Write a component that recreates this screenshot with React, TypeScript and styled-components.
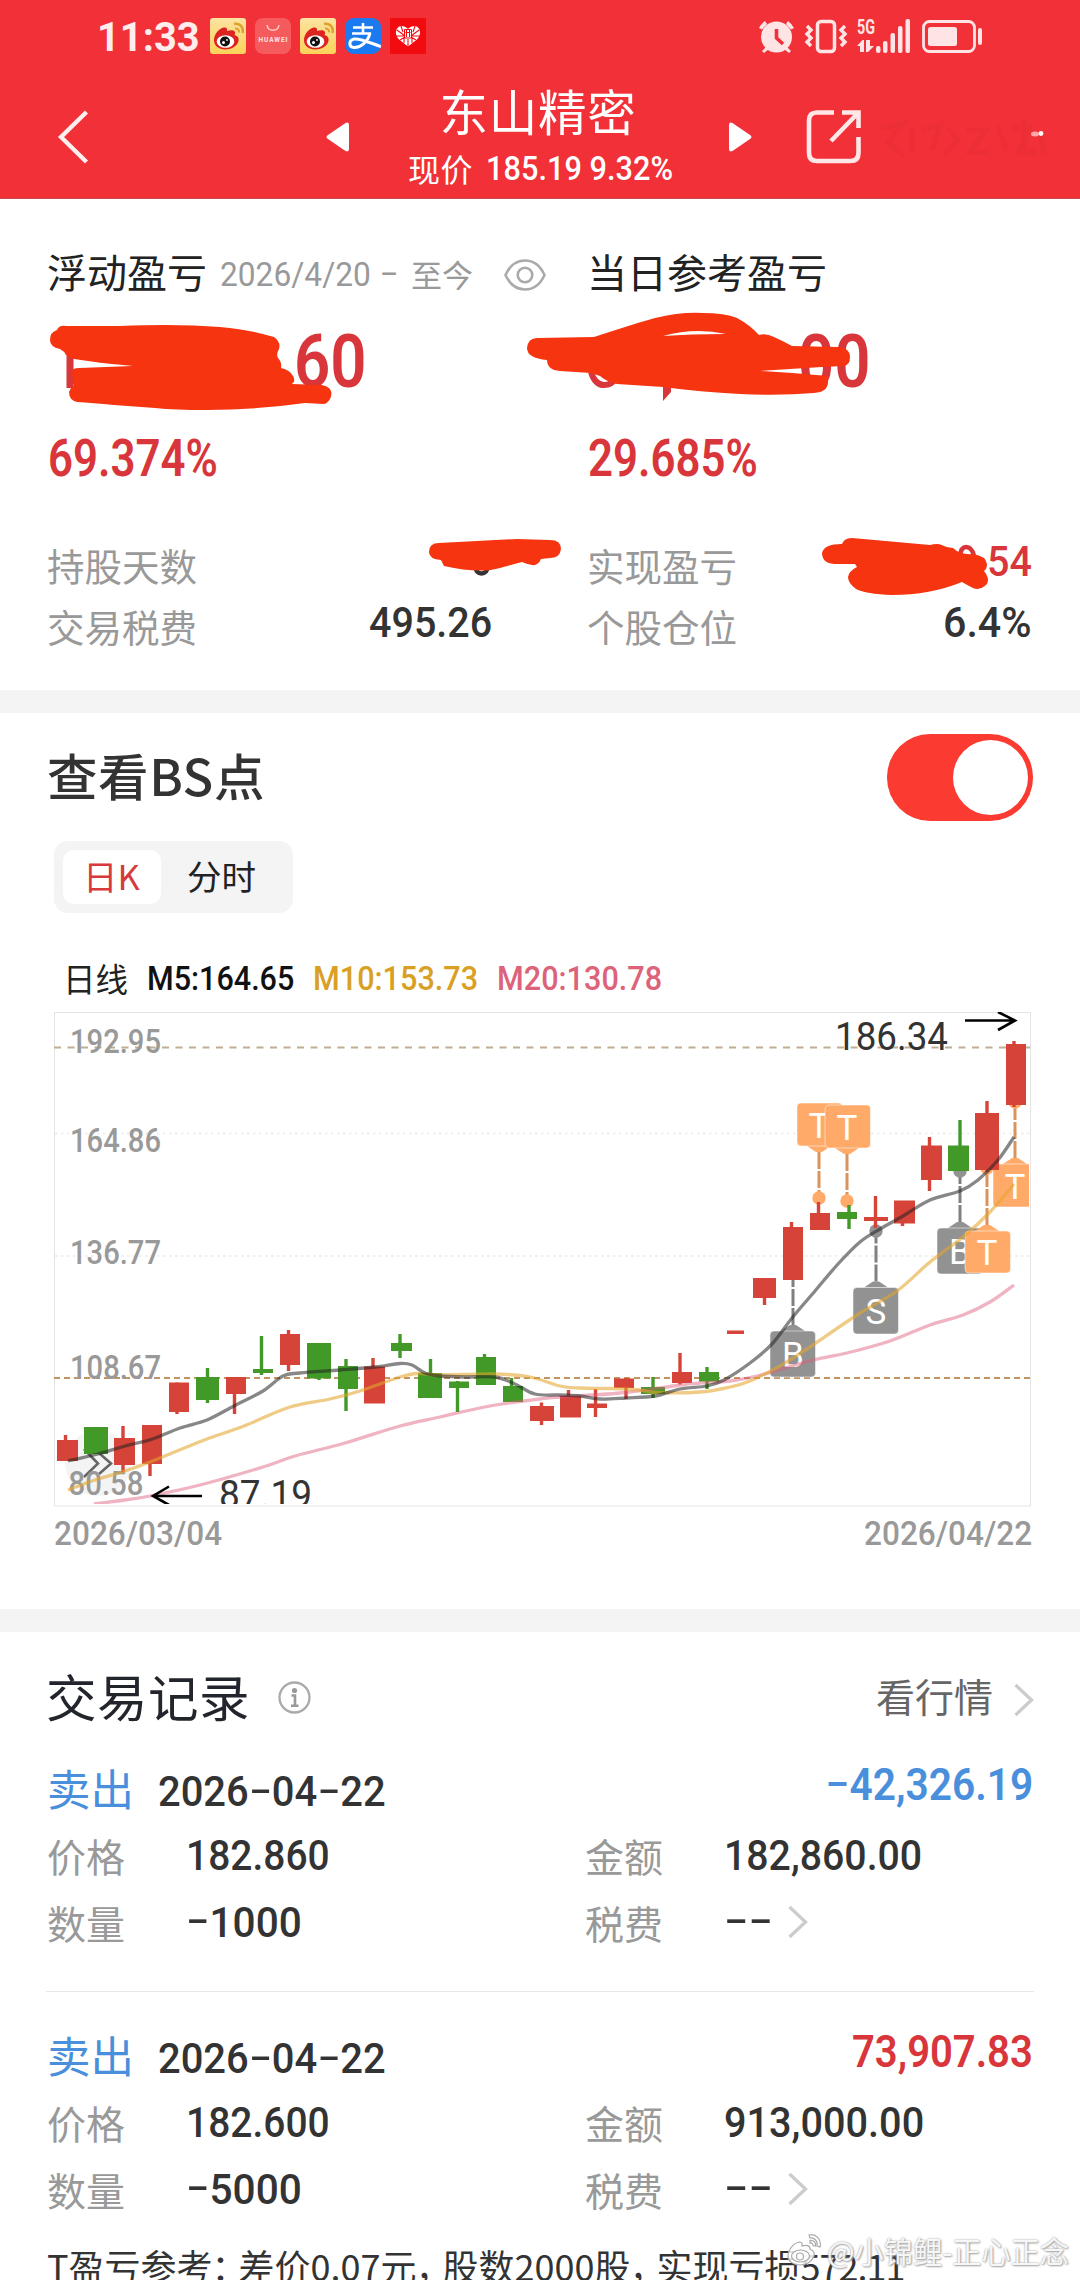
import React, { useLayoutEffect, useRef, useState } from "react";
import styled, { createGlobalStyle, css } from "styled-components";

const cjk = `"Noto Sans CJK SC", sans-serif`;
const latin = `Roboto, "Noto Sans CJK SC", sans-serif`;
const RED = "#d8363a";
const BLUE = "#4a8fdb";
const DARK = "#333333";
const GREY = "#999999";
const INK = "#f6340f";

const GlobalStyle = createGlobalStyle`
  html, body { margin: 0; padding: 0; background: #fff; }
  * { box-sizing: border-box; }
  svg { display: block; flex: none; }
`;

/* ---------- text ---------- */

const Zh = styled.span<{ $size: number; $color?: string; $weight?: number; $gap?: number; $lh?: number }>`
  font-family: ${cjk};
  font-size: ${(p) => p.$size}px;
  font-weight: ${(p) => p.$weight ?? 400};
  color: ${(p) => p.$color ?? DARK};
  letter-spacing: ${(p) => p.$gap ?? 0}px;
  line-height: ${(p) => (p.$lh ? `${p.$lh}px` : 1)};
  white-space: nowrap;
  margin-left: -1px;
`;

const FitBox = styled.span<{ $w: number; $size: number; $color: string; $weight: number; $lh?: number }>`
  display: block;
  flex: none;
  width: ${(p) => p.$w}px;
  font-family: ${latin};
  font-size: ${(p) => p.$size}px;
  font-weight: ${(p) => p.$weight};
  color: ${(p) => p.$color};
  line-height: ${(p) => (p.$lh ? `${p.$lh}px` : 1)};
  white-space: nowrap;
`;

const FitInner = styled.span`
  display: inline-block;
  transform-origin: 0 50%;
`;

const Dash = styled.span`
  display: inline-block;
  width: 0.58em;
  text-align: center;
  transform: translateY(-0.05em) scale(1.65, 0.9);
`;

type NumProps = { children: string; w: number; size?: number; color?: string; weight?: number; lh?: number };

/* Condenses a run of figures to the given width. */
function Num({ children, w, size = 43, color = DARK, weight = 500, lh }: NumProps) {
  const ref = useRef<HTMLSpanElement>(null);
  const [k, setK] = useState(1);
  useLayoutEffect(() => {
    if (ref.current) setK(w / ref.current.offsetWidth);
  }, [w, size, children]);
  return (
    <FitBox $w={w} $size={size} $color={color} $weight={weight} $lh={lh}>
      <FitInner ref={ref} style={{ transform: `scaleX(${k})` }}>
        {children.split("").map((c, i) => (c === "-" ? <Dash key={i}>-</Dash> : c))}
      </FitInner>
    </FitBox>
  );
}

/* ---------- page frame ---------- */

const Page = styled.div`
  position: relative;
  width: 1080px;
  height: 2280px;
  overflow: hidden;
  background: #fff;
`;

const Header = styled.header`
  height: 199px;
  background: #f13038;
  border-bottom: 1px solid #c9494b;
`;

const StatusBar = styled.div`
  height: 72px;
  padding: 0 96px 0 97px;
  display: flex;
  align-items: center;
  justify-content: space-between;
`;

const StatusGroup = styled.div<{ $gap: number }>`
  display: flex;
  align-items: center;
  gap: ${(p) => p.$gap}px;
`;

const ClockBox = styled.div`
  margin: 3px 1px 0 0;
`;

const NavBar = styled.div`
  height: 126px;
  padding-left: 57px;
  display: flex;
  align-items: flex-start;
`;

const NavItem = styled.div<{ $left: number; $top: number }>`
  margin-left: ${(p) => p.$left}px;
  margin-top: ${(p) => p.$top}px;
`;

const TitleBlock = styled.div`
  width: 264px;
  margin: 8px 0 0 59px;
  display: flex;
  flex-direction: column;
  align-items: center;
  gap: 8px;
`;

const TitleText = styled.div`
  height: 60px;
  padding-right: 5px;
  display: flex;
`;

const PriceLine = styled.div`
  width: 264px;
  height: 40px;
  display: flex;
  align-items: center;
  justify-content: space-between;
`;

const Band = styled.div<{ $h: number }>`
  height: ${(p) => p.$h}px;
  background: #f4f4f4;
`;

/* ---------- summary ---------- */

const Summary = styled.section`
  position: relative;
  height: 491px;
  padding: 42px 48px 0;
  display: grid;
  grid-template-columns: 540px 444px;
  align-content: start;
`;

const SummaryCol = styled.div`
  display: flex;
  flex-direction: column;
`;

const LabelLine = styled.div`
  height: 60px;
  display: flex;
  align-items: center;
`;

const DateRange = styled.div`
  display: flex;
  align-items: center;
  margin: 6px 0 0 13px;
  height: 50px;
`;

const RangeDash = styled.div`
  margin: 0 14px 0 9px;
`;

const EyeSlot = styled.div`
  margin: 7px 0 0 31px;
`;

const Big = styled.div<{ $left: number }>`
  height: 74px;
  margin: 24px 0 29px;
  padding-left: ${(p) => p.$left}px;
`;

const Percent = styled.div`
  height: 60px;
  margin-bottom: 45px;
  display: flex;
  align-items: center;
`;

const Stat = styled.div<{ $w: number }>`
  width: ${(p) => p.$w}px;
  height: 61px;
  display: flex;
  align-items: flex-start;
  justify-content: space-between;
`;

const Marker = styled.svg`
  position: absolute;
  left: 0;
  top: 0;
`;

/* ---------- chart section ---------- */

const ChartSection = styled.section`
  height: 896px;
  padding: 21px 47px 0 48px;
`;

const HeadRow = styled.div`
  height: 86px;
  display: flex;
  align-items: center;
  justify-content: space-between;
`;

const HeadTitle = styled.div`
  padding-bottom: 6px;
  display: flex;
  align-items: center;
`;

const Toggle = styled.div`
  width: 146px;
  height: 87px;
  border-radius: 43px;
  background: #fb3b31;
  padding: 6px 5px;
  display: flex;
  justify-content: flex-end;
`;

const Knob = styled.div`
  width: 75px;
  height: 75px;
  border-radius: 50%;
  background: #fff;
`;

const Segments = styled.div`
  width: 239px;
  height: 72px;
  margin: 21px 0 45px 6px;
  padding: 9px;
  border-radius: 14px;
  background: #f4f4f5;
  display: flex;
`;

const Segment = styled.div<{ $active?: boolean; $w: number }>`
  width: ${(p) => p.$w}px;
  display: flex;
  align-items: center;
  justify-content: center;
  padding-bottom: 4px;
  border-radius: 10px;
  ${(p) => p.$active && css`background: #fff;`}
`;

const Legend = styled.div`
  height: 40px;
  margin: 0 0 14px 16px;
  display: flex;
  align-items: center;
  gap: 19px;
`;

const ChartBox = styled.div`
  margin-left: 6px;
  width: 978px;
`;

const Dates = styled.div`
  height: 40px;
  margin: 6px 1px 0 6px;
  display: flex;
  align-items: center;
  justify-content: space-between;
`;

/* ---------- records ---------- */

const Records = styled.section`
  padding: 33px 46px 0 46px;
`;

const RecordsHead = styled.div`
  height: 60px;
  padding: 0 0 0 1px;
  display: flex;
  align-items: center;
`;

const InfoSlot = styled.div`
  margin: 4px auto 0 28px;
`;

const More = styled.div`
  display: flex;
  align-items: center;
  gap: 21px;
`;

const MoreChevron = styled.div`
  margin-top: 9px;
`;

const Entry = styled.article<{ $line?: boolean }>`
  padding: 35px 1px 0 2px;
  ${(p) => p.$line && css`
    padding-bottom: 39px;
    border-bottom: 1px solid #e8e8e8;
  `}
`;

const EntryHead = styled.div`
  height: 56px;
  margin-bottom: 9px;
  display: flex;
  align-items: center;
`;

const EntryDate = styled.div`
  margin: 8px auto 0 24px;
`;

const EntryAmount = styled.div`
  margin-bottom: 6px;
`;

const Fields = styled.div`
  display: grid;
  grid-template-columns: 538px 1fr;
  row-gap: 7px;
`;

const Field = styled.div`
  height: 60px;
  display: grid;
  grid-template-columns: 138px auto;
  align-items: center;
  justify-content: start;
`;

const FeeValue = styled.div`
  display: flex;
  align-items: center;
  gap: 15px;
`;

const Remark = styled.p`
  margin: 21px 0 0 1px;
  height: 50px;
  font-family: ${cjk};
  font-size: 36px;
  line-height: 50px;
  color: #333;
  white-space: nowrap;
`;

const Punct = styled.span`
  display: inline-block;
  width: 26px;
  text-indent: -1px;
`;

const Tight = styled.span`
  letter-spacing: -1px;
`;

const Watermark = styled.div`
  position: absolute;
  left: 786px;
  top: 2230px;
  height: 40px;
  display: flex;
  align-items: center;
  gap: 5px;
  font-family: ${cjk};
  font-size: 29.2px;
  line-height: 40px;
  color: rgba(255, 255, 255, 0.92);
  text-shadow: 0 0 2px #999, 1px 1px 2px #aaa;
  white-space: nowrap;
`;

/* ---------- icons ---------- */

const WeiboIcon = () => (
  <svg width="36" height="36" viewBox="0 0 36 36">
    <defs>
      <linearGradient id="wb" x1="0" y1="0" x2="0" y2="1">
        <stop offset="0" stopColor="#fbe3a0" />
        <stop offset="1" stopColor="#fbd25a" />
      </linearGradient>
    </defs>
    <rect width="36" height="36" rx="3" fill="url(#wb)" />
    <path d="M4 22C4 16 10 9 15 9.500C18 10 17 13 17 13C20 12 24 11.500 25 14C25.500 15.500 24.500 17 24.500 17C28 18 29 20 28.500 23C27.500 28 21 31.500 15 31.500C9 31.500 4 28 4 22Z" fill="#dc2320" />
    <ellipse cx="15.500" cy="23.500" rx="8.800" ry="6.300" fill="#fff" />
    <circle cx="15" cy="23.500" r="5" fill="#111" />
    <circle cx="13.500" cy="24.500" r="1.500" fill="#fff" />
    <circle cx="17" cy="22" r="0.900" fill="#fff" />
    <path d="M24 6C29 4.500 34 9 32.500 15" fill="none" stroke="#e0a030" strokeWidth="2.500" />
    <path d="M25 10.500C27.500 10 29.500 12 29 14.500" fill="none" stroke="#e0a030" strokeWidth="2" />
  </svg>
);

const HuaweiIcon = () => (
  <svg width="36" height="36" viewBox="0 0 36 36">
    <rect width="36" height="36" rx="8" fill="#f55a5c" />
    <path d="M12 7C13 14 23 14 24 7" fill="none" stroke="#ffc9c9" strokeWidth="1.500" />
    <text x="18" y="23.500" fontFamily="Roboto, sans-serif" fontWeight="700" fontSize="6.500" fill="#ffe3e3" textAnchor="middle" textLength="29">HUAWEI</text>
  </svg>
);

const AlipayIcon = () => (
  <svg width="36" height="36" viewBox="0 0 36 36">
    <rect width="36" height="36" rx="9" fill="#1b7af0" />
    <g fill="none" stroke="#fff" strokeLinecap="butt">
      <path d="M8 9.500H28M18 5V15.500M7 15.500H26" strokeWidth="2.600" />
      <path d="M25 15C23 24 15 30 9 29.500C3.500 29 3.500 22.500 9 21C15 20 25 25 36 28.500" strokeWidth="3" />
    </g>
  </svg>
);

const HeartIcon = () => (
  <svg width="36" height="36" viewBox="0 0 36 36">
    <rect width="36" height="36" fill="#f20c10" />
    <path d="M18 28.500L9 21.500C3.500 16 6 8 12 8C15 8 18 11 18 11C18 11 21 8 24 8C30 8 32.500 16 27 21.500Z" fill="#fff" />
    <path d="M7 12L15 18M29 12L21 18M11 8L13 14M25 8L23 14M6 18H14M30 18H22M10 22L15 19M26 22L21 19M14 25V20M22 25V20M18 29V21" stroke="#f20c10" strokeWidth="1.100" />
    <path d="M14.500 11.500H21.500V20H14.500ZM15.500 14.500H20.500M16.500 12V19M19.500 12V19" fill="none" stroke="#f20c10" strokeWidth="1" />
  </svg>
);

const SYS = "#ffe4e6";

const SystemIcons = () => (
  <svg width="226" height="36" viewBox="759 18 226 36">
    <g fill={SYS}>
      <circle cx="777.500" cy="37" r="15.500" />
      <path d="M760 28A20 20 0 0 1 766 21L768 24L763 29.500ZM795 28A20 20 0 0 0 789 21L787 24L792 29.500Z" />
      <path d="M763 51L768 46L770 49L765 53ZM792 51L787 46L785 49L790 53Z" />
    </g>
    <path d="M777.500 29V38L784 44" fill="none" stroke="#f13038" strokeWidth="3.600" />
    <g fill="none" stroke={SYS}>
      <rect x="818.500" y="21.500" width="17" height="30" rx="3.500" strokeWidth="3.500" />
      <path d="M808 26L812 30L808 34L812 38L808 42L812 46" strokeWidth="3.400" />
      <path d="M846 26L842 30L846 34L842 38L846 42L842 46" strokeWidth="3.400" />
      <rect x="924.500" y="21.500" width="51" height="30" rx="6" strokeWidth="2.800" />
    </g>
    <text x="858" y="34" fontFamily="Roboto, sans-serif" fontWeight="700" fontSize="20.500" fill={SYS} textLength="18" lengthAdjust="spacingAndGlyphs">5G</text>
    <g fill={SYS}>
      <path d="M858 46L863.500 40H865V52H861V46ZM867 40H871V46H875L869 52H867Z" />
      <rect x="877" y="46" width="4.500" height="7" rx="2" />
      <rect x="884" y="41" width="4.500" height="12" rx="2" />
      <rect x="891.500" y="33" width="4.500" height="20" rx="2" />
      <rect x="899" y="26" width="4.500" height="27" rx="2" />
      <rect x="906.500" y="19" width="4.500" height="34" rx="2" />
      <rect x="929" y="27" width="29" height="19" rx="2.500" />
      <rect x="979" y="28" width="4" height="17" rx="2" />
    </g>
  </svg>
);

const BackIcon = () => (
  <svg width="32" height="54" viewBox="57 110 32 54">
    <path d="M86.500 112L61 137L86.500 162" fill="none" stroke="#fff0f0" strokeWidth="4.300" />
  </svg>
);

const Triangle = ({ flip }: { flip?: boolean }) => (
  <svg width="24" height="30" viewBox="0 0 24 30">
    <path transform={flip ? "translate(24 0) scale(-1 1)" : undefined} d="M2 13L19.500 1Q23 -0.500 23 3V27Q23 30.500 19.500 29L2 17Q-1 15 2 13Z" fill="#fff" />
  </svg>
);

const ShareIcon = () => (
  <svg width="56" height="56" viewBox="806 109 56 56">
    <g fill="none" stroke="#ffe6e7" strokeWidth="4.600">
      <path d="M834 112.500H817Q809 112.500 809 120.500V153Q809 161 817 161H850.500Q858.500 161 858.500 153V137" />
      <path d="M842 112.500H858.500V128M858 113L831 141" />
    </g>
  </svg>
);

const Smudge = () => (
  <svg width="170" height="50" viewBox="878 112 170 50">
    <g fill="none" stroke="#e62e36" strokeWidth="5" opacity="0.450">
      <path d="M882 128L902 124L888 142L904 156M912 128V152M922 130L940 126L932 150M948 128L958 140L944 154M966 130H986L970 152H990M998 126L1006 150M1012 128H1030L1018 152H1036M1024 120V156M1040 132L1044 154" />
    </g>
    <ellipse cx="1035" cy="134" rx="4" ry="2.500" fill="#f9a9ad" />
    <circle cx="1041" cy="133.500" r="2.400" fill="#fff" />
  </svg>
);

const EyeIcon = () => (
  <svg width="42" height="32" viewBox="0 0 42 32">
    <g fill="none" stroke="#aaa" strokeWidth="2.600">
      <path d="M1.500 16C6 6 13 1.500 21 1.500S36 6 40.500 16C36 26 29 30.500 21 30.500S6 26 1.500 16Z" />
      <circle cx="21" cy="16" r="7.300" />
    </g>
  </svg>
);

const InfoIcon = () => (
  <svg width="33" height="33" viewBox="0 0 33 33">
    <circle cx="16.500" cy="16.500" r="15" fill="none" stroke="#aaa" strokeWidth="2.300" />
    <circle cx="16.500" cy="9.500" r="2.600" fill="#999" />
    <path d="M13.500 14.500H17V24.500M13 24.800H20.500" fill="none" stroke="#999" strokeWidth="2.600" />
  </svg>
);

const ChevronIcon = () => (
  <svg width="20" height="34" viewBox="0 0 20 34">
    <path d="M1.500 2L17.500 17L1.500 32" fill="none" stroke="#ccc" strokeWidth="3.300" />
  </svg>
);

const WatermarkIcon = () => (
  <svg width="36" height="34" viewBox="0 0 36 34">
    <g fill="#fff" fillOpacity="0.850" stroke="#aaa" strokeWidth="1.200">
      <path d="M2 23C2 16 9 9 14 9C17 9.500 16 13 16 13C20 12 24 12 24 16C28 18 29 20 28 23C26 29 20 32 14 32C7 32 2 28 2 23Z" />
      <ellipse cx="14.500" cy="23" rx="9" ry="6" />
      <circle cx="14" cy="23.500" r="3.500" />
      <path d="M23 2C30 0 36 7 34 14L31 13C32 8 28 4 24 5ZM24 7.500C28 7 30 10 29.500 13L27 12.500C27 10.500 26 9.800 24 10Z" />
    </g>
  </svg>
);

/* ---------- marker strokes over the amounts ---------- */

const MarkerStrokes = () => (
  <Marker width="1080" height="491" viewBox="0 199 1080 491">
    <g fill="none" stroke={RED}>
      <path d="M70 345V388" strokeWidth="7" />
      <path d="M591 372Q595 385 604 385Q612 385 616 378" strokeWidth="6" />
      <path d="M960 560V556Q961 547 966 547Q972 547 974 556" strokeWidth="4.500" />
    </g>
    <path d="M663 386H671V392L663 401Z" fill={RED} />
    <path d="M475 566Q476 573.500 481.500 573.500Q487 573.500 488 566" fill="none" stroke={DARK} strokeWidth="4.500" />
    <g fill={INK}>
      <path d="M50 340Q50 332 57 330Q59 325 66 326L120 326Q145 325 165 325Q195 325 220 327Q252 330 274 337Q281 342 279 349Q276 354 278 358Q282 362 281 368Q290 370 293 376Q296 381 292 384L322 385Q331 387 331.500 393Q331 402 324 404L305 403Q255 410 207 410Q175 410 155 408L114 405Q92 403 77 402Q69 400 69 392Q70 388 74 385L73 384L72 371Q73 368 79 368L133 366Q100 363 88 361L74 359L66 355Q64 351 60 349Q50 347 50 340Z" />
      <path fillRule="evenodd" d="M527 348Q528 338 537 338L594 337Q640 322 655 318Q680 312 702 313Q725 313 737 318Q750 325 759 335Q766 333 774 337Q783 341 792 346L838 347Q850 348 850 357Q850 365 844 366L822 367L760 371Q795 373 828 376V382Q828 392 814 393Q780 396 740 394Q700 392 663 387L617 384Q607 382 600 376L591 373L560 371Q547 370 547 360Q527 358 527 348ZM663 336Q695 327 726 334Q690 334 663 336Z" />
      <path d="M429 552Q429 543 439 543L517 539L550 540Q561 540 561 549Q560 558 550 558L541 559Q538 566 532 565Q526 564 522 562L500 568Q480 574 444 566L441 560Q429 559 429 552Z" />
      <path d="M822 553Q824 544 842 544Q844 538 852 538L930 545Q937 543 942 545Q945 547 953 548Q960 555 973 554Q986 556 987 564Q987 569 984 571Q990 578 987 584Q980 591 973 588Q967 585 962 582Q930 595 892 595Q866 594 856 589Q848 583 848 577Q849 571 857 567L855 564H834Q822 563 822 553Z" />
    </g>
  </Marker>
);

/* ---------- candlestick chart ---------- */

type Candle = [up: 0 | 1, x1: number, x2: number, open: number, close: number, wick: number, hi: number, lo: number];

const candles: Candle[] = [
  [1, 57, 78, 1440, 1461, 65.5, 1435, 1461],
  [0, 84, 108, 1427, 1454, 96, 1427, 1454],
  [1, 114, 135, 1438, 1465, 123, 1426, 1472],
  [1, 142, 162, 1425, 1464, 150, 1425, 1476],
  [1, 169, 189, 1382.5, 1412, 177, 1382.5, 1414],
  [0, 196, 219, 1377, 1400, 207.5, 1368, 1403],
  [1, 226, 246, 1377, 1394, 234.5, 1377, 1414],
  [0, 253, 273, 1369, 1373, 261.500, 1336, 1375],
  [1, 280, 300, 1334, 1365, 288.500, 1330, 1371],
  [0, 307, 331, 1343, 1378.500, 319, 1343, 1380],
  [0, 338, 358, 1366, 1389, 346, 1359, 1411],
  [1, 364, 385, 1366.500, 1403.500, 373, 1358, 1403],
  [0, 391, 412, 1343, 1351, 400, 1334, 1358],
  [0, 418, 442, 1373, 1398, 430.500, 1359, 1398],
  [0, 449, 469, 1381.500, 1388, 457.500, 1381, 1412],
  [0, 476, 496, 1357, 1385, 484.500, 1354, 1385],
  [0, 503, 523, 1386, 1402, 511.500, 1378, 1402],
  [1, 530, 554, 1406, 1421, 541.500, 1402.500, 1425],
  [1, 560, 581, 1396, 1417.500, 568.500, 1390, 1417],
  [1, 587, 607, 1403.500, 1408, 595.500, 1389, 1417],
  [1, 614, 634, 1378.500, 1388, 626, 1378, 1399],
  [0, 641, 665, 1387, 1394, 653, 1377, 1398],
  [1, 672, 692, 1372, 1383, 680, 1353, 1384.500],
  [0, 699, 719, 1372, 1381.500, 707, 1367, 1389],
  [1, 727, 744, 1330.500, 1334, 735, 1331, 1333],
  [1, 753, 776, 1278, 1298, 764.500, 1278, 1305],
  [1, 783, 803, 1227, 1280, 791.500, 1222, 1280],
  [1, 810, 830, 1213, 1230, 818.500, 1202, 1230],
  [0, 837, 857, 1212, 1219, 849, 1205, 1229],
  [1, 864, 888, 1217, 1221, 875.500, 1196, 1228],
  [1, 894, 915, 1200.500, 1223.500, 902.500, 1201, 1226],
  [1, 921, 942, 1145.500, 1180, 929.500, 1137, 1191],
  [0, 948, 969, 1145.500, 1171, 960, 1120, 1171],
  [1, 975, 999, 1113, 1170, 987, 1101, 1172],
  [1, 1006, 1026, 1044, 1105, 1014, 1041, 1107],
];

const ma5 = [[68,1461],[98,1454],[125,1446],[151,1439.5],[180,1428],[207,1420],[234,1406],[263,1391],[283,1376],[300,1373],[340,1370],[375,1367],[400,1363.5],[412,1365],[425,1373],[440,1376],[465,1377],[495,1377],[515,1384],[535,1394],[560,1395],[580,1396],[600,1399],[626,1398],[655,1396],[680,1389],[707,1386],[724,1380],[750,1363],[772,1344],[792,1318],[815,1291],[838,1264],[860,1242],[880,1229],[903,1216],[930,1200],[960,1191],[978,1180],[998,1160],[1014,1137]];
const ma10 = [[68,1490],[95,1480],[122,1472],[150,1462],[182,1449],[207,1439],[244,1426],[290,1407],[330,1399],[360,1391],[400,1377],[418,1373.5],[440,1375],[495,1374],[530,1377],[560,1386],[580,1388],[610,1388.5],[640,1390],[655,1392.5],[700,1392],[730,1387],[750,1381],[780,1366],[807,1349],[857,1315],[897,1291],[930,1262],[963,1237],[990,1212],[1014,1184]];
const ma20 = [[94,1504],[125,1500],[150,1496],[200,1485],[263,1467],[295,1456],[345,1443],[400,1426],[440,1417],[490,1406],[540,1399],[560,1397],[620,1393],[680,1385],[700,1383],[730,1381],[757,1376],[813,1360],[847,1353],[890,1341],[930,1325],[963,1315],[990,1302],[1014,1285]];

function smooth(p: number[][]) {
  let d = `M${p[0][0]} ${p[0][1]}`;
  for (let i = 0; i < p.length - 1; i++) {
    const a = p[i - 1] ?? p[i];
    const b = p[i];
    const c = p[i + 1];
    const e = p[i + 2] ?? c;
    d += `C${b[0] + (c[0] - a[0]) / 6} ${b[1] + (c[1] - a[1]) / 6} ${c[0] - (e[0] - b[0]) / 6} ${c[1] - (e[1] - b[1]) / 6} ${c[0]} ${c[1]}`;
  }
  return d;
}

type FlagProps = { x: number; y: number; w?: number; h?: number; cx: number; label: string; orange?: boolean; below?: boolean; anchor: number; dot?: boolean };

const Flag = ({ x, y, w = 45.5, h = 45, cx, label, orange, below, anchor, dot }: FlagProps) => {
  const fill = orange ? "#ffaa68" : "#929292";
  const line = orange ? "#d9935c" : "#808084";
  const edge = below ? y : y + h;
  const tip = below ? y - 6 : y + h + 6;
  return (
    <g>
      <path d={`M${cx} ${tip}V${anchor}`} stroke={line} strokeWidth="3" strokeDasharray="17 2" />
      {dot && <circle cx={cx} cy={anchor} r="6.700" fill={fill} />}
      <path d={`M${cx - 12} ${edge}L${cx - 3} ${tip}H${cx + 3}L${cx + 12} ${edge}Z`} fill={fill} />
      <rect x={x} y={y} width={w} height={h} rx="4" fill={fill} stroke="#fff" strokeOpacity="0.500" strokeWidth="1" />
      <text x={cx} y={y + h / 2 + 13} fontFamily="Roboto, sans-serif" fontSize="35" fill="#fff" textAnchor="middle">{label}</text>
    </g>
  );
};

const axis = [
  { t: "192.95", x: 70, y: 1053, w: 91 },
  { t: "164.86", x: 70, y: 1152, w: 91 },
  { t: "136.77", x: 70, y: 1264, w: 91 },
  { t: "108.67", x: 70, y: 1379, w: 91 },
  { t: "80.58", x: 68.5, y: 1494.5, w: 75 },
];

const KChart = () => (
  <svg width="978" height="495" viewBox="54 1012 978 495">
    <defs>
      <clipPath id="plot"><rect x="55" y="1012" width="974" height="492" /></clipPath>
    </defs>
    <rect x="54.500" y="1012.500" width="976" height="493.500" fill="#fff" stroke="#e4e4e4" />
    <path d="M55 1133.500H1030M55 1256H1030" stroke="#efefef" strokeWidth="2" strokeDasharray="2.500 3.500" />
    <path d="M54 1047.500H1030" stroke="#bfae92" strokeWidth="2" strokeDasharray="7 6.500" />
    <path d="M54 1378H1030" stroke="#c39462" strokeWidth="2" strokeDasharray="6 4" />
    <circle cx="98" cy="1463" r="33" fill="#f4f4f4" />
    <g fill="none" stroke="#666" strokeWidth="2.600">
      <path d="M84 1449L98 1463.500L84 1477M99 1453L111 1463.500L99 1474" />
    </g>
    {axis.map((a) => (
      <text key={a.t} x={a.x} y={a.y} fontFamily="Roboto, sans-serif" fontWeight="500" fontSize="33" fill="#999" textLength={a.w} lengthAdjust="spacingAndGlyphs">{a.t}</text>
    ))}
    <g clipPath="url(#plot)">
      <Flag x={797} y={1103} h={43} cx={819} label="T" orange anchor={1198} dot />
      <Flag x={825} y={1105} h={43} cx={847} label="T" orange anchor={1201} dot />
      <Flag x={770} y={1331} h={46} cx={793} label="B" below anchor={1280} />
      <Flag x={853} y={1287.500} h={46.500} cx={876} label="S" below anchor={1231} dot />
      <Flag x={937} y={1228} h={46} cx={960} label="B" below anchor={1171} dot />
      <Flag x={965} y={1231} h={42} cx={987} label="T" orange below anchor={1168} dot />
      <Flag x={993} y={1164} h={43} cx={1015} label="T" orange below anchor={1102} dot />
      {candles.map(([up, x1, x2, a, b, w, hi, lo], i) => (
        <g key={i} fill={up ? "#d64338" : "#429928"}>
          <rect x={x1} y={a} width={x2 - x1} height={b - a} />
          <rect x={w - 1.7} y={hi} width="3.400" height={lo - hi} />
        </g>
      ))}
      <g fill="none" strokeWidth="3.300">
        <path d={smooth(ma20)} stroke="#dc5a78" strokeOpacity="0.460" />
        <path d={smooth(ma10)} stroke="#e3a62c" strokeOpacity="0.580" />
        <path d={smooth(ma5)} stroke="#222" strokeOpacity="0.540" />
      </g>
      <g fill="none" stroke="#000" strokeWidth="2.600">
        <path d="M202 1496H154M169 1486.500L153 1496L169 1505" />
        <path d="M965 1020.500H1014M998 1012L1015 1020.500L998 1030" />
      </g>
      <text x="219" y="1507.500" fontFamily="Roboto, sans-serif" fontSize="38" fill="#333" textLength="93" lengthAdjust="spacingAndGlyphs">87.19</text>
      <text x="835" y="1050" fontFamily="Roboto, sans-serif" fontSize="39" fill="#333" textLength="113" lengthAdjust="spacingAndGlyphs">186.34</text>
    </g>
  </svg>
);

/* ---------- records data ---------- */

const trades = [
  { amount: "-42,326.19", aw: 207, color: BLUE, price: "182.860", total: "182,860.00", tw: 198, qty: "-1000" },
  { amount: "73,907.83", aw: 181, color: RED, price: "182.600", total: "913,000.00", tw: 200, qty: "-5000" },
];

export default function App() {
  return (
    <>
      <GlobalStyle />
      <Page>
        <Header>
          <StatusBar>
            <StatusGroup $gap={9}>
              <ClockBox><Num w={103} size={41} weight={700} color="#ffecec">11:33</Num></ClockBox>
              <WeiboIcon />
              <HuaweiIcon />
              <WeiboIcon />
              <AlipayIcon />
              <HeartIcon />
            </StatusGroup>
            <SystemIcons />
          </StatusBar>
          <NavBar>
            <NavItem $left={0} $top={38}><BackIcon /></NavItem>
            <NavItem $left={237} $top={50}><Triangle /></NavItem>
            <TitleBlock>
              <TitleText><Zh $size={48.5} $gap={0.8} $color="#fff" $lh={60}>东山精密</Zh></TitleText>
              <PriceLine>
                <Zh $size={32} $gap={0.5} $color="#fff" $lh={36}>现价</Zh>
                <Num w={187} size={34} color="#fff">185.19 9.32%</Num>
              </PriceLine>
            </TitleBlock>
            <NavItem $left={55} $top={50}><Triangle flip /></NavItem>
            <NavItem $left={54} $top={37}><ShareIcon /></NavItem>
            <NavItem $left={16} $top={40}><Smudge /></NavItem>
          </NavBar>
        </Header>

        <Summary>
          <SummaryCol>
            <LabelLine>
              <Zh $size={40} $color="#222" $lh={60}>浮动盈亏</Zh>
              <DateRange>
                <Num w={151} size={34} color={GREY} weight={400}>2026/4/20</Num>
                <RangeDash><Num w={18} size={30} color={GREY} weight={500}>-</Num></RangeDash>
                <Zh $size={31} $color={GREY} $lh={44}>至今</Zh>
              </DateRange>
              <EyeSlot><EyeIcon /></EyeSlot>
            </LabelLine>
            <Big $left={246}><Num w={73} size={74} weight={600} color={RED}>60</Num></Big>
            <Percent><Num w={170} size={51} weight={600} color={RED}>69.374%</Num></Percent>
            <Stat $w={444}><Zh $size={37.5} $color={GREY} $lh={63}>持股天数</Zh></Stat>
            <Stat $w={444}>
              <Zh $size={37.5} $color={GREY} $lh={63}>交易税费</Zh>
              <Num w={123} lh={56}>495.26</Num>
            </Stat>
          </SummaryCol>
          <SummaryCol>
            <LabelLine><Zh $size={40} $color="#222" $lh={60}>当日参考盈亏</Zh></LabelLine>
            <Big $left={210}><Num w={73} size={74} weight={600} color={RED}>00</Num></Big>
            <Percent><Num w={170} size={51} weight={600} color={RED}>29.685%</Num></Percent>
            <Stat $w={444}>
              <Zh $size={37.5} $color={GREY} $lh={63}>实现盈亏</Zh>
              <Num w={45} lh={56} color={RED}>54</Num>
            </Stat>
            <Stat $w={444}>
              <Zh $size={37.5} $color={GREY} $lh={63}>个股仓位</Zh>
              <Num w={89} lh={56}>6.4%</Num>
            </Stat>
          </SummaryCol>
          <MarkerStrokes />
        </Summary>

        <Band $h={23} />

        <ChartSection>
          <HeadRow>
            <HeadTitle><Zh $size={50.5} $gap={0.6} $weight={500} $lh={60}>查看BS点</Zh></HeadTitle>
            <Toggle><Knob /></Toggle>
          </HeadRow>
          <Segments>
            <Segment $active $w={98}><Zh $size={34.5} $color="#d8393a" $lh={40}>日K</Zh></Segment>
            <Segment $w={122}><Zh $size={34.5} $color="#222" $lh={40}>分时</Zh></Segment>
          </Segments>
          <Legend>
            <Zh $size={32.5} $color="#222" $lh={36}>日线</Zh>
            <Num w={147} size={33} color="#111">M5:164.65</Num>
            <Num w={165} size={33} color="#d9a023">M10:153.73</Num>
            <Num w={165} size={33} color="#dc6379">M20:130.78</Num>
          </Legend>
          <ChartBox><KChart /></ChartBox>
          <Dates>
            <Num w={168} size={34} color={GREY}>2026/03/04</Num>
            <Num w={168} size={34} color={GREY}>2026/04/22</Num>
          </Dates>
        </ChartSection>

        <Band $h={23} />

        <Records>
          <RecordsHead>
            <Zh $size={50.5} $gap={0.5} $color="#22252b" $lh={60}>交易记录</Zh>
            <InfoSlot><InfoIcon /></InfoSlot>
            <More>
              <Zh $size={39} $color="#666" $lh={50}>看行情</Zh>
              <MoreChevron><ChevronIcon /></MoreChevron>
            </More>
          </RecordsHead>
          {trades.map((t, i) => (
            <Entry key={i} $line={i === 0}>
              <EntryHead>
                <Zh $size={43.5} $color={BLUE} $lh={56}>卖出</Zh>
                <EntryDate><Num w={228} size={42}>2026-04-22</Num></EntryDate>
                <EntryAmount><Num w={t.aw} size={44} weight={600} color={t.color}>{t.amount}</Num></EntryAmount>
              </EntryHead>
              <Fields>
                <Field>
                  <Zh $size={39} $color={GREY} $lh={56}>价格</Zh>
                  <Num w={144}>{t.price}</Num>
                </Field>
                <Field>
                  <Zh $size={39} $color={GREY} $lh={56}>金额</Zh>
                  <Num w={t.tw}>{t.total}</Num>
                </Field>
                <Field>
                  <Zh $size={39} $color={GREY} $lh={56}>数量</Zh>
                  <Num w={116}>{t.qty}</Num>
                </Field>
                <Field>
                  <Zh $size={39} $color={GREY} $lh={56}>税费</Zh>
                  <FeeValue>
                    <Num w={49}>--</Num>
                    <ChevronIcon />
                  </FeeValue>
                </Field>
              </Fields>
            </Entry>
          ))}
          <Remark>
            T盈亏参考<Punct>：</Punct>差价0.07元<Punct>，</Punct>股数2000股<Punct>，</Punct>实现亏损<Tight>572.11</Tight>
          </Remark>
        </Records>

        <Watermark>
          <WatermarkIcon />
          @小锦鲤-正心正念
        </Watermark>
      </Page>
    </>
  );
}
